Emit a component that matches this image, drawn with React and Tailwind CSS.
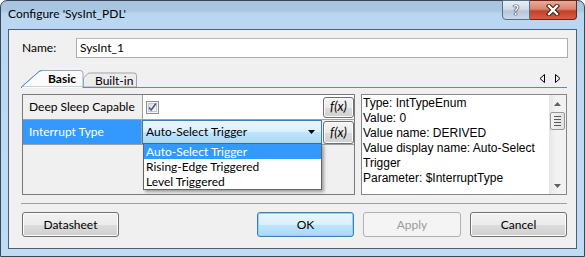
function FxButton({ className }) {
  return (
    <div
      className={
        "flex items-center justify-center rounded-[3px] border border-[#707070] bg-[linear-gradient(180deg,#f4f4f4_0%,#ebebeb_50%,#dddddd_51%,#d0d0d0_100%)] italic text-[13px] text-black shadow-[inset_0_0_0_1px_#fbfbfb] " +
        className
      }
    >
      f(x)
    </div>
  );
}

function Button({ children, variant }) {
  if (variant === "default") {
    return (
      <div className="flex h-[25px] w-[97px] items-center justify-center rounded-[3px] border border-[#3c7fb1] bg-[linear-gradient(180deg,#eaf6fd_0%,#d9f0fc_50%,#bee6fd_51%,#a7d9f5_100%)] text-black shadow-[inset_0_0_0_1px_#8ed4f7]">
        {children}
      </div>
    );
  }
  if (variant === "disabled") {
    return (
      <div className="flex h-[25px] w-[98px] items-center justify-center rounded-[3px] border border-[#adb2b5] bg-[#f4f4f4] text-[#9a9a9a]">
        {children}
      </div>
    );
  }
  return (
    <div className="flex h-[25px] w-[97px] items-center justify-center rounded-[3px] border border-[#707070] bg-[linear-gradient(180deg,#f2f2f2_0%,#ebebeb_50%,#dddddd_51%,#cfcfcf_100%)] text-black shadow-[inset_0_0_0_1px_#fcfcfc]">
      {children}
    </div>
  );
}

export default function App() {
  return (
    <div className="h-[257px] w-[585px] overflow-hidden bg-white font-['Lato','Open_Sans',sans-serif]">
      <div className="flex h-[257px] w-[585px] flex-col rounded-t-[7px] border border-[#3b4654] bg-[linear-gradient(180deg,#a8c4df_0px,#a9c6e1_9px,#bad7f2_13px,#c0dcf5_100%)]">
        {/* Title bar */}
        <div className="flex h-[28px] items-start justify-between">
          <div className="pl-[7px] pt-[5px] text-[12px] leading-[16px] text-black">
            Configure 'SysInt_PDL'
          </div>
          <div className="mr-[7px] mt-[-1px] flex">
            <div className="flex h-[20px] w-[28px] items-center justify-center rounded-bl-[4px] border border-[#5b6d84] bg-[linear-gradient(180deg,#e6eef7_0%,#cfdcea_45%,#b4c6db_55%,#c9d9ea_100%)]">
              <span className="text-[13px] font-bold leading-none text-white [text-shadow:0_0_1px_#222,0_0_1px_#222,0_0_1px_#222]">
                ?
              </span>
            </div>
            <div className="flex h-[20px] w-[47px] items-center justify-center rounded-br-[4px] border border-l-0 border-[#6b2418] bg-[linear-gradient(180deg,#e9a99a_0%,#dc8470_45%,#c4402a_55%,#d85c42_100%)]">
              <svg width="14" height="12" viewBox="0 0 14 12">
                <path d="M3 2 L11 10 M11 2 L3 10" stroke="#3a1b16" strokeWidth="4.4" strokeLinecap="square" />
                <path d="M3 2 L11 10 M11 2 L3 10" stroke="#ffffff" strokeWidth="2.4" strokeLinecap="square" />
              </svg>
            </div>
          </div>
        </div>

        {/* Client area */}
        <div className="mx-[7px] flex h-[220px] flex-col border border-[#4f5f72] bg-[#f0f0f0] pl-[12px] pr-[9px] text-[12px]">
          {/* Name row */}
          <div className="mt-[8px] flex h-[20px] items-center">
            <div className="w-[55px] pl-[1px] text-black">Name:</div>
            <div className="mr-[-1px] flex h-[20px] flex-1 items-center border border-[#abadb3] border-t-[#b5b8bd] bg-white pl-[3px] text-black">
              SysInt_1
            </div>
          </div>

          {/* Tabs */}
          <div className="relative mt-[12px] flex h-[18px] items-start">
            <svg className="absolute left-0 top-0" width="546" height="18" viewBox="0 0 546 18">
              <path d="M 62.5 17 L 62.5 8 L 67 3.5 Q 68 3 69.5 3 L 113 3 Q 115.5 3 115.5 5.5 L 115.5 17 Z" fill="#ececec" stroke="#a3a3a3" />
              <path d="M 0.5 17 L 18 1.5 Q 19.5 0.5 21.5 0.5 L 59 0.5 Q 62 0.5 62 3.5 L 62 17 Z" fill="#fbfbfb" stroke="#8fa9c4" />
              <path d="M 0.5 17 L 18 1.5 Q 19.5 0.5 21.5 0.5" fill="none" stroke="#4d8fd6" />
              <rect x="0" y="17" width="546" height="1" fill="#4d8fd6" />
              <rect x="1" y="17" width="60.5" height="1" fill="#fbfbfb" />
            </svg>
            <div className="relative ml-[27px] mt-[1px] font-bold leading-[16px] text-black">Basic</div>
            <div className="relative ml-[19px] mt-[3px] leading-[16px] text-black">Built-in</div>
            <div className="relative ml-auto mr-[6px] mt-[4px] flex gap-[8px]">
              <svg width="7" height="9" viewBox="0 0 7 9">
                <path d="M5.5 0.5 L1 4.5 L5.5 8.5 Z" fill="none" stroke="#000" />
              </svg>
              <svg width="7" height="9" viewBox="0 0 7 9">
                <path d="M1.5 0.5 L6 4.5 L1.5 8.5 Z" fill="none" stroke="#000" />
              </svg>
            </div>
          </div>

          {/* Panels */}
          <div className="mt-[6px] flex h-[101px] gap-[6px]">
            {/* Property grid */}
            <div className="relative ml-[1px] flex h-[101px] w-[333px] flex-col border border-[#7a7a7a] bg-[#f0f0f0]">
              <div className="flex h-[25px] border-b border-[#a0a0a0]">
                <div className="flex w-[120px] items-center whitespace-nowrap border-r border-[#a0a0a0] pl-[6px] text-black">
                  Deep Sleep Capable
                </div>
                <div className="flex flex-1 items-center justify-between bg-white">
                  <svg className="ml-[3px]" width="13" height="13" viewBox="0 0 13 13">
                    <defs>
                      <linearGradient id="cbg" x1="0" y1="0" x2="1" y2="1">
                        <stop offset="0" stopColor="#dcdcdc" />
                        <stop offset="1" stopColor="#fbfbfb" />
                      </linearGradient>
                    </defs>
                    <rect x="0.5" y="0.5" width="12" height="12" fill="#f4f4f4" stroke="#8e8f8f" />
                    <rect x="2.5" y="2.5" width="8" height="8" fill="url(#cbg)" stroke="#c8c8c8" />
                    <path d="M3 6.5 L5.2 9 L10 2.5" fill="none" stroke="#4a5d8f" strokeWidth="1.6" />
                  </svg>
                  <FxButton className="h-[21px] w-[31px]" />
                </div>
              </div>
              <div className="flex h-[25px] border-b border-[#a0a0a0]">
                <div className="flex w-[120px] items-center border-r border-[#a0a0a0] bg-[#3399ff] pl-[6px] text-white">
                  Interrupt Type
                </div>
                <div className="flex flex-1 items-start">
                  <div className="flex h-[24px] w-[180px] items-center justify-between border border-[#3c7fb1] bg-[linear-gradient(180deg,#eaf6fd_0%,#d9f0fc_50%,#bee6fd_51%,#a7d9f5_100%)] pl-[3px] pr-[6px] text-black">
                    <span>Auto-Select Trigger</span>
                    <svg width="7" height="4" viewBox="0 0 7 4">
                      <path d="M0 0 L7 0 L3.5 4 Z" fill="#000" />
                    </svg>
                  </div>
                  <FxButton className="ml-[1px] mt-[1px] h-[23px] w-[31px]" />
                </div>
              </div>
              {/* Dropdown list */}
              <div className="absolute left-[120px] top-[48px] z-10 flex h-[47px] w-[179px] flex-col border border-[#646464] bg-white leading-[15px] text-black shadow-[2px_2px_3px_rgba(0,0,0,0.35)]">
                <div className="h-[15px] bg-[#3399ff] pl-[2px] text-white">Auto-Select Trigger</div>
                <div className="h-[15px] pl-[2px]">Rising-Edge Triggered</div>
                <div className="h-[15px] pl-[2px]">Level Triggered</div>
              </div>
            </div>

            {/* Description */}
            <div className="flex h-[101px] w-[206px] border border-[#828790] bg-white">
              <div className="flex-1 pl-[1px] pt-[1px] font-['Liberation_Sans',sans-serif] text-[12px] leading-[15px] text-black">
                <div>Type: IntTypeEnum</div>
                <div>Value: 0</div>
                <div>Value name: DERIVED</div>
                <div>Value display name: Auto-Select</div>
                <div>Trigger</div>
                <div>Parameter: $InterruptType</div>
              </div>
              <div className="flex w-[17px] flex-col bg-[linear-gradient(90deg,#e5e5e5,#f2f2f2_40%,#f2f2f2)]">
                <div className="flex h-[17px] items-center justify-center">
                  <svg width="7" height="4" viewBox="0 0 7 4">
                    <path d="M0 4 L7 4 L3.5 0 Z" fill="#606060" />
                  </svg>
                </div>
                <div className="mx-[1px] flex h-[18px] flex-col items-center justify-center gap-[2px] rounded-[2px] border border-[#979797] bg-[linear-gradient(90deg,#f2f2f2,#e2e2e2)]">
                  <div className="h-px w-[7px] bg-[#595959]" />
                  <div className="h-px w-[7px] bg-[#595959]" />
                  <div className="h-px w-[7px] bg-[#595959]" />
                  <div className="h-px w-[7px] bg-[#595959]" />
                </div>
                <div className="flex-1" />
                <div className="flex h-[17px] items-center justify-center">
                  <svg width="7" height="4" viewBox="0 0 7 4">
                    <path d="M0 0 L7 0 L3.5 4 Z" fill="#606060" />
                  </svg>
                </div>
              </div>
            </div>
          </div>

          {/* Separator */}
          <div className="mt-[8px] h-px bg-[#a0a0a0]" />

          {/* Buttons */}
          <div className="mt-[8px] flex h-[25px] items-center">
            <div className="ml-[1px]">
              <Button>Datasheet</Button>
            </div>
            <div className="ml-auto flex gap-[9px]">
              <Button variant="default">OK</Button>
              <Button variant="disabled">Apply</Button>
              <Button>Cancel</Button>
            </div>
          </div>
        </div>
      </div>
    </div>
  );
}
